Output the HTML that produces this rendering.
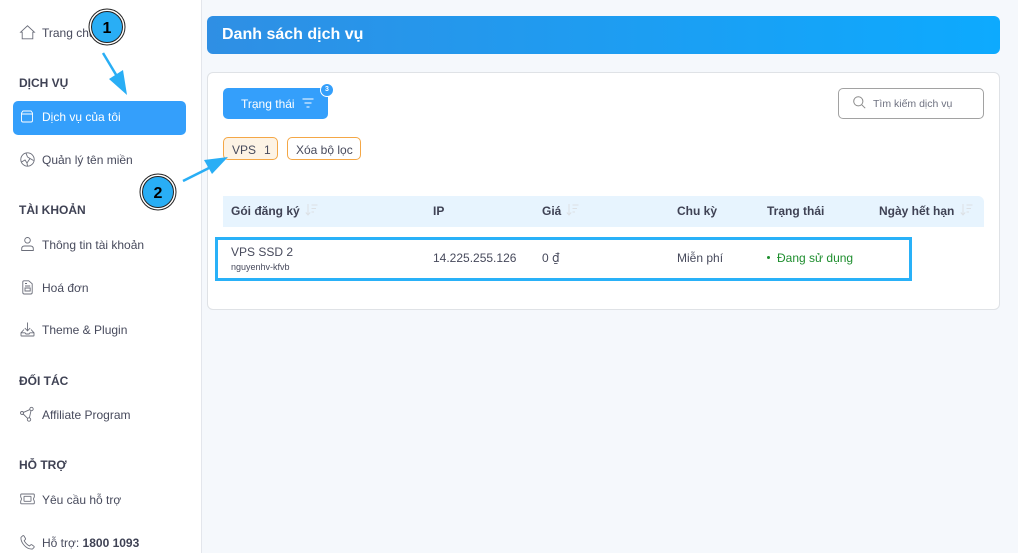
<!DOCTYPE html>
<html lang="vi"><head><meta charset="utf-8"><title>Danh sách dịch vụ</title>
<style>
html,body{margin:0;padding:0;width:1018px;height:553px;overflow:hidden;background:#f5f8fc;font-family:"Liberation Sans",sans-serif;color:#3f4254}
.a{position:absolute;white-space:nowrap}
.t{font-size:12px;line-height:14px;color:#474a5c}
.h{font-size:12px;line-height:14px;font-weight:bold;color:#3f4254;left:19px}
.th{font-size:12px;line-height:14px;font-weight:bold;color:#3f4254;top:204px}
svg{position:absolute;overflow:visible;fill:none}
.ic path,.ic circle,.ic rect{stroke:#6b6e7a;stroke-width:.9}
</style></head><body>
<div class="a" style="left:0;top:0;width:201px;height:553px;background:#fff;border-right:1px solid #e3e6ec"></div>

<svg class="ic" style="left:20px;top:25px" width="15" height="15"><path d="M0.6 7.2L7.5 0.8L14.4 7.2H12.8V13.8H2.2V7.2Z"/></svg>
<div class="a t" style="left:42px;top:26px">Trang chủ</div>

<div class="a h" style="top:76px">DỊCH VỤ</div>
<div class="a" style="left:13px;top:101px;width:173px;height:34px;background:#349ffb;border-radius:5px"></div>
<svg style="left:21px;top:110px" width="12" height="13"><path d="M2 1H10L11.5 3V10.5Q11.5 12 10 12H2Q0.5 12 0.5 10.5V3ZM0.5 4H11.5" stroke="#fff" stroke-width=".9"/></svg>
<div class="a t" style="left:42px;top:110px;color:#fff">Dịch vụ của tôi</div>

<svg class="ic" style="left:20px;top:152px" width="15" height="15"><circle cx="7.5" cy="7.5" r="6.7"/><path d="M1.5 10L5 8L7 11L10 6.5L13.5 8.500M6 1.200L7.500 5L10 6.500M7 11L7.500 14"/></svg>
<div class="a t" style="left:42px;top:153px">Quản lý tên miền</div>

<div class="a h" style="top:203px">TÀI KHOẢN</div>
<svg class="ic" style="left:21px;top:237px" width="13" height="15"><circle cx="6.5" cy="3.3" r="2.8"/><path d="M0.700 13.500V11.800Q0.700 9 3.500 9H9.500Q12.300 9 12.300 11.800V13.500Z"/></svg>
<div class="a t" style="left:42px;top:238px">Thông tin tài khoản</div>

<svg class="ic" style="left:22px;top:280px" width="11" height="15"><path d="M2 0.800H6.800L10.200 3.800V12.500Q10.200 14 8.700 14H2.300Q0.800 14 0.800 12.500V2Q0.800 0.800 2 0.800ZM3 3.500H5M3 6H8.200M3 8H8.200V11H3Z"/></svg>
<div class="a t" style="left:42px;top:281px">Hoá đơn</div>

<svg class="ic" style="left:20px;top:322px" width="15" height="15"><path d="M7.500 0.500V8.500M4.800 6L7.500 8.800L10.200 6M4 7.500L1 10.800V13.500Q1 14 1.500 14H13.500Q14 14 14 13.500V10.800L11 7.500M1 10.800H5L6 12H9L10 10.800H14"/></svg>
<div class="a t" style="left:42px;top:323px">Theme &amp; Plugin</div>

<div class="a h" style="top:374px">ĐỐI TÁC</div>
<svg class="ic" style="left:20px;top:407px" width="14" height="15"><circle cx="2" cy="6" r="1.500"/><circle cx="11.500" cy="2" r="1.700"/><circle cx="9" cy="12.500" r="1.700"/><path d="M3.400 5.400L9.900 2.600M3.200 7L7.700 11.400M11 3.700L9.400 10.800"/></svg>
<div class="a t" style="left:42px;top:408px">Affiliate Program</div>

<div class="a h" style="top:458px">HỖ TRỢ</div>
<svg class="ic" style="left:20px;top:493px" width="15" height="12"><path d="M1.500 1H13.500Q14.300 1 14.300 1.800V4Q12.800 6 14.300 8V10Q14.300 10.800 13.500 10.800H1.500Q0.700 10.800 0.700 10V8Q2.200 6 0.700 4V1.800Q0.700 1 1.500 1ZM4.500 3.300H10.500Q11 3.300 11 3.800V7.800Q11 8.300 10.500 8.300H4.500Q4 8.300 4 7.800V3.800Q4 3.300 4.500 3.300Z"/></svg>
<div class="a t" style="left:42px;top:493px">Yêu cầu hỗ trợ</div>

<svg class="ic" style="left:20px;top:535px" width="15" height="15"><path d="M1 2.300L2.800 0.700Q3.500 0.300 4 1L5.500 3.500Q5.800 4 5.300 4.500L4.200 5.700Q6 9.300 9.500 11L10.800 9.800Q11.300 9.400 11.800 9.700L14 11.300Q14.500 11.800 14 12.400L12.500 14Q7.500 14.500 3.500 9.500Q0.500 5.500 1 2.300Z"/></svg>
<div class="a t" style="left:42px;top:536px">Hỗ trợ: <b style="color:#3f4254">1800 1093</b></div>

<div class="a" style="left:207px;top:16px;width:793px;height:38px;border-radius:6px;background:linear-gradient(90deg,#2f8fe4,#0daafe)"></div>
<div class="a" style="left:222px;top:26px;font-size:16px;line-height:18px;font-weight:bold;color:#fff">Danh sách dịch vụ</div>

<div class="a" style="left:207px;top:72px;width:791px;height:236px;background:#fff;border:1px solid #dfe2e6;border-radius:6px"></div>

<div class="a" style="left:223px;top:88px;width:105px;height:31px;background:#349ffb;border-radius:5px"></div>
<div class="a t" style="left:241px;top:97px;color:#fff">Trạng thái</div>
<svg style="left:302px;top:98px" width="12" height="11"><path d="M0.500 1H11.500M2.500 5H9.500M4.500 9H7.500" stroke="#fff" stroke-width=".9"/></svg>
<div class="a" style="left:320px;top:83px;width:12px;height:12px;background:#349ffb;border-radius:50%;border:0.5px solid #fff;font-size:7px;line-height:12px;text-align:center;color:#fff;font-weight:bold">3</div>

<div class="a" style="left:838px;top:88px;width:144px;height:29px;border:1px solid #a2a2a2;border-radius:5px;background:#fff"></div>
<svg style="left:853px;top:96px" width="13" height="13"><circle cx="5.300" cy="5.300" r="4.600" stroke="#8a8a8a"/><path d="M8.800 8.800L12.200 12.200" stroke="#8a8a8a"/></svg>
<div class="a" style="left:873px;top:98px;font-size:10.500px;line-height:13px;color:#6e7180">Tìm kiếm dịch vụ</div>

<div class="a" style="left:223px;top:137px;width:53px;height:21px;background:#fdf3e5;border:1px solid #f4a746;border-radius:5px"></div>
<div class="a t" style="left:232px;top:143px">VPS</div>
<div class="a t" style="left:264px;top:143px">1</div>
<div class="a" style="left:287px;top:137px;width:72px;height:21px;background:#fff;border:1px solid #f4a746;border-radius:5px"></div>
<div class="a t" style="left:296px;top:143px">Xóa bộ lọc</div>

<div class="a" style="left:223px;top:196px;width:761px;height:31px;background:#e7f4fe;border-radius:0 6px 0 0"></div>
<div class="a th" style="left:231px">Gói đăng ký</div>
<svg style="left:305px;top:204px" width="13" height="12"><path d="M3 0V11M0.800 8.500L3 11L5.200 8.500M6.500 1H12.500M6.500 4.500H11M6.500 8H9" stroke="#dce0e4" stroke-width="1"/></svg>
<div class="a th" style="left:433px">IP</div>
<div class="a th" style="left:542px">Giá</div>
<svg style="left:566px;top:204px" width="13" height="12"><path d="M3 0V11M0.800 8.500L3 11L5.200 8.500M6.500 1H12.500M6.500 4.500H11M6.500 8H9" stroke="#dce0e4" stroke-width="1"/></svg>
<div class="a th" style="left:677px">Chu kỳ</div>
<div class="a th" style="left:767px">Trạng thái</div>
<div class="a th" style="left:879px">Ngày hết hạn</div>
<svg style="left:960px;top:204px" width="13" height="12"><path d="M3 0V11M0.800 8.500L3 11L5.200 8.500M6.500 1H12.500M6.500 4.500H11M6.500 8H9" stroke="#dce0e4" stroke-width="1"/></svg>

<div class="a t" style="left:231px;top:245px">VPS SSD 2</div>
<div class="a" style="left:231px;top:262px;font-size:9px;line-height:11px;color:#474a5c">nguyenhv-kfvb</div>
<div class="a t" style="left:433px;top:251px">14.225.255.126</div>
<div class="a t" style="left:542px;top:251px">0 <span style="font-family:'DejaVu Sans',sans-serif">₫</span></div>
<div class="a t" style="left:677px;top:251px">Miễn phí</div>
<div class="a" style="left:767px;top:256px;width:3px;height:3px;background:#1e8e2e;border-radius:50%"></div>
<div class="a t" style="left:777px;top:251px;color:#1e8e2e">Đang sử dụng</div>

<div class="a" style="left:215px;top:237px;width:691px;height:38px;border:3px solid #29b1f8"></div>

<svg style="left:0;top:0" width="1018" height="553">
<path d="M103 53L118 78" stroke="#29aef5" stroke-width="2.500"/>
<path d="M123 70L127 95L109 79Z" fill="#29aef5"/>
<path d="M183 181L213 166" stroke="#29aef5" stroke-width="2.500"/>
<path d="M228 157L212 174L204 160Z" fill="#29aef5"/>
<circle cx="107" cy="27" r="18" fill="#fff" stroke="#222" stroke-width="1"/>
<circle cx="107" cy="27" r="15.500" fill="#29aef5" stroke="#222" stroke-width="1"/>
<circle cx="158" cy="192" r="18" fill="#fff" stroke="#222" stroke-width="1"/>
<circle cx="158" cy="192" r="15.500" fill="#29aef5" stroke="#222" stroke-width="1"/>
<text x="107" y="33" text-anchor="middle" font-family="Liberation Sans" font-weight="bold" font-size="16" fill="#000">1</text>
<text x="158" y="198" text-anchor="middle" font-family="Liberation Sans" font-weight="bold" font-size="16" fill="#000">2</text>
</svg>
</body></html>
